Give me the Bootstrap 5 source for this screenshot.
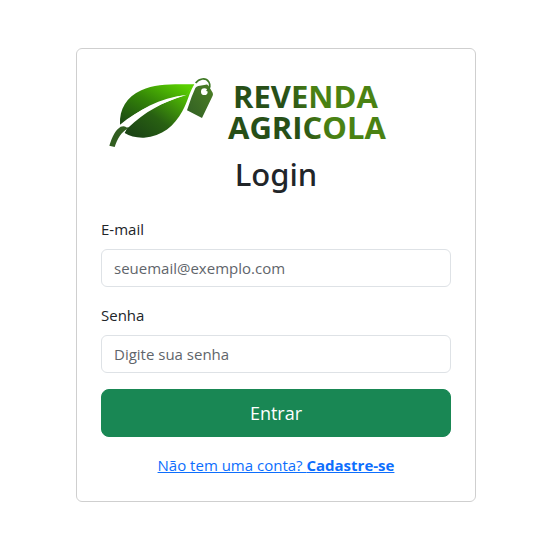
<!DOCTYPE html>
<html lang="pt-BR">
<head>
<meta charset="utf-8">
<meta name="viewport" content="width=device-width, initial-scale=1">
<title>Login - Revenda Agricola</title>
<link href="https://cdn.jsdelivr.net/npm/bootstrap@5.3.0/dist/css/bootstrap.min.css" rel="stylesheet">
<style>
body { font-family: "Open Sans", "Noto Sans", sans-serif; font-size: 15px; line-height: 24px; }
.login-card { max-width: 400px; --bs-card-border-color: #cfcfcf; }
.brand-logo { height: 82px; }
.brand-logo text { font-family: "Open Sans", sans-serif; font-weight: 700; font-size: 31px; }
.login-title { font-family: "Noto Sans", sans-serif; font-weight: 500; font-size: 31px; line-height: 38px; }
.form-control { font-size: 15px; line-height: 24px; }
.form-control::placeholder { color: #5f656b; }
.btn-enter { font-size: 18px; line-height: 30px; }
</style>
</head>
<body>
<main class="container-fluid pt-5 ps-3 pe-2">
  <div class="card login-card w-100 mx-auto">
    <div class="card-body p-4">
      <svg class="brand-logo d-block w-100" viewBox="101 73 350 82" role="img" aria-label="Revenda Agricola">
        <defs>
          <linearGradient id="leafTop" x1="0.1" y1="1" x2="0.95" y2="0.1"><stop offset="0" stop-color="#1c4a14"/><stop offset=".5" stop-color="#338408"/><stop offset="1" stop-color="#5ad000"/></linearGradient>
          <linearGradient id="leafLow" x1="0.1" y1="0.9" x2="0.9" y2="0.1"><stop offset="0" stop-color="#1b4415"/><stop offset=".4" stop-color="#286012"/><stop offset="1" stop-color="#57cc00"/></linearGradient>
          <linearGradient id="tagFill" x1="0" y1="1" x2="1" y2="0"><stop offset="0" stop-color="#315f24"/><stop offset="1" stop-color="#4c7f25"/></linearGradient>
          <linearGradient id="word" gradientUnits="userSpaceOnUse" x1="288" y1="106" x2="316" y2="94"><stop offset="0" stop-color="#274f17"/><stop offset="1" stop-color="#4a8213"/></linearGradient>
        </defs>
        <g transform="translate(100 70) scale(.33333)">
          <path fill="url(#leafTop)" d="M60 164C58 117 79 82 124 61C169 40 219 43 283 43C276 54 269 64 259 75C193 85 113 119 60 164Z"/>
          <path fill="url(#leafLow)" d="M283 43C268 67 263 96 247 124C223 168 187 199 132 203C109 204 89 198 74 189L82 174C76 168 72 168 67 171C122 129 182 99 257 76Z"/>
          <path fill="#fff" d="M58 170C112 119 182 84 256 75C189 96 132 127 86 172L72 174Z"/>
          <path fill="#315d20" d="M28 227C37 199 46 180 62 170C72 166 80 170 83 176C65 185 52 205 44 231Z"/>
          <path fill="url(#tagFill)" fill-rule="evenodd" d="M275 80L286 54Q289 49 295 48L317 44Q322 43 326 48L338 68Q340 72 338 77L306 144L261 121ZM323 65A10 10 0 1 0 303 65A10 10 0 1 0 323 65Z"/>
          <path fill="none" stroke="#3e7824" stroke-width="5" d="M287 39C297 25 317 22 326 35C332 45 329 56 320 63"/>
        </g>
        <text fill="url(#word)"><tspan x="233" y="108">REVENDA</tspan><tspan x="228" y="139">AGRICOLA</tspan></text>
      </svg>
      <h1 class="login-title text-center mb-4">Login</h1>
      <form>
        <div class="mb-3">
          <label for="email" class="form-label">E-mail</label>
          <input type="email" class="form-control" id="email" placeholder="seuemail@exemplo.com">
        </div>
        <div class="mb-3">
          <label for="senha" class="form-label">Senha</label>
          <input type="password" class="form-control" id="senha" placeholder="Digite sua senha">
        </div>
        <button type="submit" class="btn btn-success btn-lg btn-enter w-100">Entrar</button>
      </form>
      <div class="text-center mt-3"><a href="#">Não tem uma conta? <strong>Cadastre-se</strong></a></div>
    </div>
  </div>
</main>
<script src="https://cdn.jsdelivr.net/npm/bootstrap@5.3.0/dist/js/bootstrap.bundle.min.js"></script>
</body>
</html>
